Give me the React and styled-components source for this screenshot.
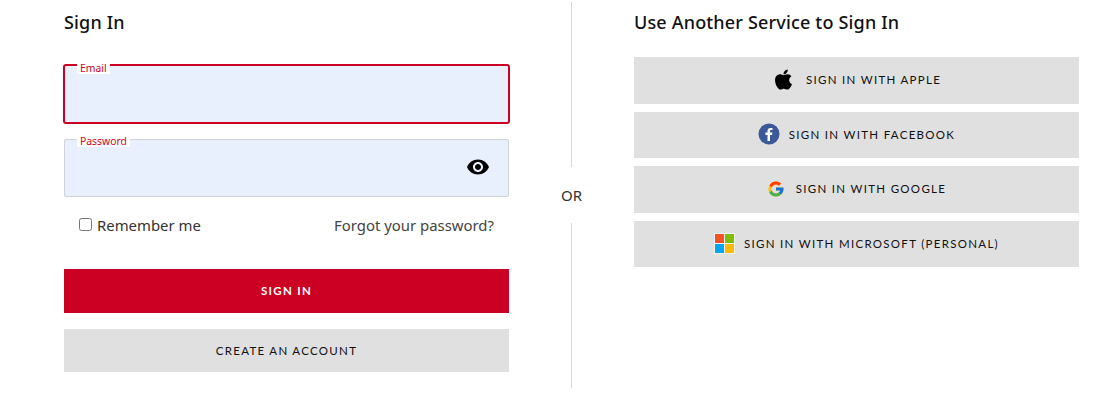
import React from "react";
import styled, { createGlobalStyle } from "styled-components";
import { FaApple } from "react-icons/fa";
import { FcGoogle } from "react-icons/fc";
import { MdVisibility } from "react-icons/md";

const GlobalStyle = createGlobalStyle`
  html, body {
    margin: 0;
    padding: 0;
    background: #fff;
    font-family: "Noto Sans", "Open Sans", sans-serif;
  }
`;

const Page = styled.div`
  display: grid;
  grid-template-columns: 445px 125px 445px;
  width: 1120px;
  height: 402px;
  box-sizing: border-box;
  padding-left: 64px;
  overflow: hidden;
`;
const Column = styled.div`
  display: flex;
  flex-direction: column;
  padding-top: 10px;
`;
const Heading = styled.h2`
  margin: 0;
  height: 24px;
  font-size: 18px;
  line-height: 24px;
  font-weight: 500;
  letter-spacing: 0.17px;
  color: #111;
`;
const Form = styled.form`
  display: flex;
  flex-direction: column;
  margin-top: 30px;
`;
const Field = styled.div`
  position: relative;
  box-sizing: border-box;
  height: ${({ $focused }) => ($focused ? "60px" : "58px")};
  margin: ${({ $focused }) => ($focused ? "0 -1px 15px" : "0")};
  background: #e8f0fe;
  border: ${({ $focused }) => ($focused ? "2px solid #cc0022" : "1px solid #ced4da")};
  border-radius: ${({ $focused }) => ($focused ? "3px" : "2px")};
`;
const FieldLabel = styled.label`
  position: absolute;
  top: ${({ $focused }) => ($focused ? "-3px" : "-4px")};
  left: 12px;
  padding: 0 3px;
  background: #fff;
  font-size: 10.4px;
  line-height: 11px;
  color: #d0021b;
`;
const EyeButton = styled.span`
  position: absolute;
  top: 15px;
  right: 18px;
  display: flex;
  font-size: 24px;
  color: #000;
`;
const OptionsRow = styled.div`
  display: flex;
  align-items: center;
  justify-content: space-between;
  height: 27px;
  margin-top: 14px;
  padding: 0 15px;
  font-size: 14.9px;
  color: #333;
`;
const Remember = styled.label`
  display: flex;
  align-items: center;
  gap: 5px;
`;
const Checkbox = styled.input`
  width: 13px;
  height: 13px;
  margin: 0;
`;
const ForgotLink = styled.a`
  color: #444;
  text-decoration: none;
`;
const Button = styled.button`
  display: flex;
  align-items: center;
  justify-content: center;
  width: 100%;
  height: ${({ $height }) => $height || "46.5px"};
  margin-top: ${({ $top }) => $top || "0"};
  padding: 0 0 1px;
  border: 0;
  background: ${({ $primary }) => ($primary ? "#cc0022" : "#e0e0e0")};
  color: ${({ $primary }) => ($primary ? "#fff" : "#111")};
  font-family: Lato, sans-serif;
  font-size: 11.5px;
  font-weight: ${({ $primary }) => ($primary ? 700 : 400)};
  letter-spacing: 1.3px;
  text-transform: uppercase;
`;
const ServiceList = styled.div`
  display: flex;
  flex-direction: column;
  gap: 8px;
  margin-top: 23px;
`;
const ServiceButton = styled(Button)`
  gap: ${({ $gap }) => $gap || "9px"};
`;
const ServiceIcon = styled.span`
  display: flex;
  font-size: ${({ $size }) => $size || "20px"};
  color: #000;
`;
const Divider = styled.div`
  display: flex;
  flex-direction: column;
  align-items: center;
  padding: 2px 0 14px 0;
`;
const DividerLine = styled.div`
  flex: 1;
  width: 1px;
  background: #d8d8d8;
`;
const DividerText = styled.div`
  display: flex;
  align-items: center;
  height: 56px;
  font-size: 15px;
  color: #333;
`;

const FacebookIcon = () => (
  <svg width="22" height="22" viewBox="0 0 22 22">
    <circle cx="11" cy="11" r="10.5" fill="#3b5998" />
    <path
      d="M12 18v-6h2.1l.3-2.4H12V8.2c0-.7.2-1.1 1.2-1.1h1.3V5c-.3 0-1-.1-1.9-.1-1.9 0-3.1 1.1-3.1 3.1v1.6H7.4V12h2.1v6z"
      fill="#fff"
    />
  </svg>
);

const MicrosoftIcon = () => (
  <svg width="21" height="21" viewBox="0 0 21 21">
    <rect width="21" height="21" fill="#f3f3f3" />
    <rect x="1" y="1" width="9" height="9" fill="#f35325" />
    <rect x="11" y="1" width="9" height="9" fill="#81bc06" />
    <rect x="1" y="11" width="9" height="9" fill="#05a6f0" />
    <rect x="11" y="11" width="9" height="9" fill="#ffba08" />
  </svg>
);

const App = () => {
  return (
    <Page>
      <GlobalStyle />
      <Column>
        <Heading>Sign In</Heading>
        <Form onSubmit={(e) => e.preventDefault()}>
          <Field $focused>
            <FieldLabel $focused>Email</FieldLabel>
          </Field>
          <Field>
            <FieldLabel>Password</FieldLabel>
            <EyeButton>
              <MdVisibility />
            </EyeButton>
          </Field>
          <OptionsRow>
            <Remember>
              <Checkbox type="checkbox" />
              Remember me
            </Remember>
            <ForgotLink href="#">Forgot your password?</ForgotLink>
          </OptionsRow>
          <Button $primary $height="44px" $top="31px" type="submit">
            Sign In
          </Button>
          <Button $height="43px" $top="16px" type="button">
            Create an account
          </Button>
        </Form>
      </Column>
      <Divider>
        <DividerLine />
        <DividerText>OR</DividerText>
        <DividerLine />
      </Divider>
      <Column>
        <Heading>Use Another Service to Sign In</Heading>
        <ServiceList>
          <ServiceButton $gap="11px" type="button">
            <ServiceIcon $size="23px">
              <FaApple />
            </ServiceIcon>
            Sign in with Apple
          </ServiceButton>
          <ServiceButton type="button">
            <ServiceIcon>
              <FacebookIcon />
            </ServiceIcon>
            Sign in with Facebook
          </ServiceButton>
          <ServiceButton $gap="11px" type="button">
            <ServiceIcon $size="18px">
              <FcGoogle />
            </ServiceIcon>
            Sign in with Google
          </ServiceButton>
          <ServiceButton type="button">
            <ServiceIcon>
              <MicrosoftIcon />
            </ServiceIcon>
            Sign in with Microsoft (Personal)
          </ServiceButton>
        </ServiceList>
      </Column>
    </Page>
  );
};

export default App;
